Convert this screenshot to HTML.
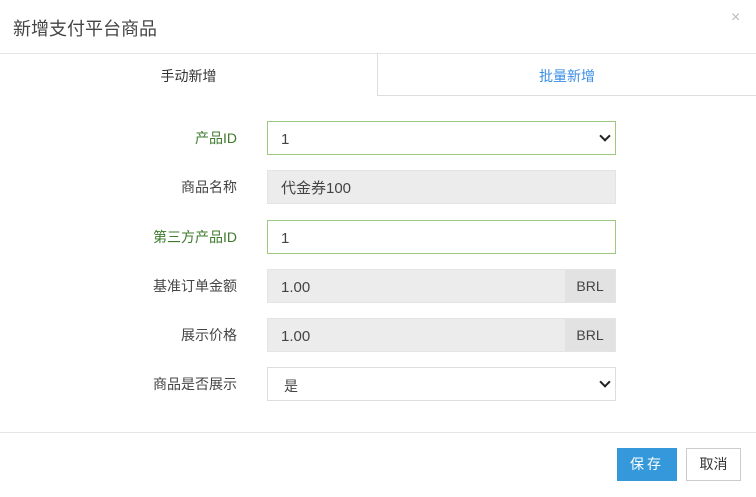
<!DOCTYPE html>
<html><head><meta charset="utf-8"><style>
body{margin:0;width:756px;height:497px;background:#fff;font-family:"Liberation Sans","Noto Sans CJK SC",sans-serif;position:relative;overflow:hidden;color:#333}
.a{position:absolute}
.lbl{position:absolute;right:519px;font-size:14px;color:#444;line-height:34px}
.g{color:#3d7a2c}
.box{position:absolute;left:267px;width:347px;height:32px;border:1px solid #ddd;background:#fff;font-size:15px;line-height:32px;padding-left:0}
.box span{position:absolute;left:13px;top:2px;color:#444}
.dis{background:#ececec;border-color:#e4e4e4}
.add{position:absolute;right:0;top:0;width:50px;height:32px;background:#e2e2e2;text-align:center;font-size:14px;color:#444}
.chev{position:absolute;right:6px;width:6px;height:6px;border-right:2px solid #222;border-bottom:2px solid #222;transform:rotate(45deg);top:10px}
</style></head><body>
<div class="a" style="left:13px;top:15px;font-size:18px;color:#444">新增支付平台商品</div>
<div class="a" style="left:731px;top:9px;font-size:16px;color:#bbb">×</div>
<div class="a" style="left:0;top:53px;width:756px;height:1px;background:#e5e5e5"></div>
<div class="a" style="left:377px;top:53px;width:1px;height:43px;background:#ddd"></div>
<div class="a" style="left:377px;top:95px;width:379px;height:1px;background:#ddd"></div>
<div class="a" style="left:0;top:66px;width:377px;text-align:center;font-size:14px;color:#333">手动新增</div>
<div class="a" style="left:378px;top:66px;width:378px;text-align:center;font-size:14px;color:#3a8ee6">批量新增</div>

<div class="lbl g" style="top:121px">产品ID</div>
<div class="box" style="top:121px;border-color:#9cc97e"><span>1</span><i class="chev"></i></div>
<div class="lbl" style="top:170px">商品名称</div>
<div class="box dis" style="top:170px"><span>代金券100</span></div>
<div class="lbl g" style="top:220px">第三方产品ID</div>
<div class="box" style="top:220px;border-color:#9cc97e"><span>1</span></div>
<div class="lbl" style="top:269px">基准订单金额</div>
<div class="box dis" style="top:269px"><span>1.00</span><div class="add">BRL</div></div>
<div class="lbl" style="top:318px">展示价格</div>
<div class="box dis" style="top:318px"><span>1.00</span><div class="add">BRL</div></div>
<div class="lbl" style="top:367px">商品是否展示</div>
<div class="box" style="top:367px"><span style="font-size:14px;left:16px">是</span><i class="chev"></i></div>

<div class="a" style="left:0;top:432px;width:756px;height:1px;background:#e5e5e5"></div>
<div class="a" style="left:617px;top:448px;width:60px;height:33px;background:#3498db;color:#fff;font-size:14px;line-height:33px;text-align:center;letter-spacing:3px">保存</div>
<div class="a" style="left:686px;top:448px;width:53px;height:31px;border:1px solid #ccc;color:#333;font-size:14px;line-height:31px;text-align:center">取消</div>
</body></html>
